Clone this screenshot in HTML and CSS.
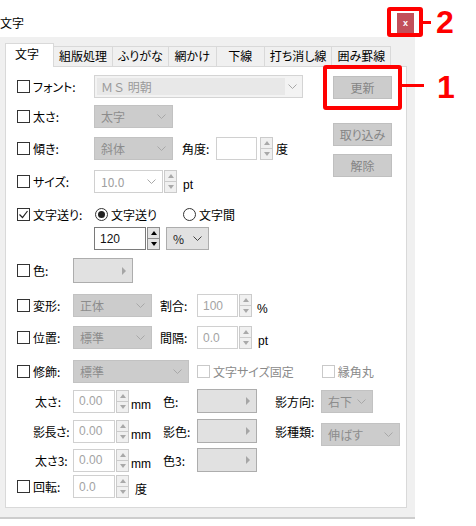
FILE: index.html
```html
<!DOCTYPE html>
<html lang="ja">
<head>
  <meta charset="UTF-8">
  <meta name="viewport" content="width=device-width, initial-scale=1.0">
  <title>文字</title>
  <link rel="stylesheet" href="styles.css">
</head>
<body>

  <div class="window">
    <div class="titlebar">
      <span class="title">文字</span>
      <button class="close">x</button>
    </div>

    <div class="body">
      <ul class="tabs">
        <li class="active">文字</li>
        <li>組版処理</li>
        <li>ふりがな</li>
        <li>網かけ</li>
        <li>下線</li>
        <li>打ち消し線</li>
        <li>囲み罫線</li>
      </ul>

      <div class="panel">
        <div class="top">
          <div class="top-rows">
            <div class="row">
              <label class="lbl wide"><span class="box"></span>フォント:</label>
              <div class="combo edit w-font"><span class="val">ＭＳ 明朝</span><svg class="chev" width="9" height="5" viewBox="0 0 9 5"><polyline points="0.5,0.5 4.5,4.5 8.5,0.5"/></svg></div>
            </div>
            <div class="row r-weight">
              <label class="lbl wide"><span class="box"></span>太さ:</label>
              <div class="combo w-79"><span>太字</span><svg class="chev" width="9" height="5" viewBox="0 0 9 5"><polyline points="0.5,0.5 4.5,4.5 8.5,0.5"/></svg></div>
            </div>
            <div class="row">
              <label class="lbl wide"><span class="box"></span>傾き:</label>
              <div class="combo w-79"><span>斜体</span><svg class="chev" width="9" height="5" viewBox="0 0 9 5"><polyline points="0.5,0.5 4.5,4.5 8.5,0.5"/></svg></div>
              <span class="sub-lbl angle">角度:</span>
              <div class="num w-41"></div>
              <div class="spin gap3"><span class="up"></span><span class="down"></span></div>
              <span class="unit">度</span>
            </div>
            <div class="row r-size">
              <label class="lbl wide"><span class="box"></span>サイズ:</label>
              <div class="combo white w-size"><span>10.0</span><svg class="chev" width="9" height="5" viewBox="0 0 9 5"><polyline points="0.5,0.5 4.5,4.5 8.5,0.5"/></svg></div>
              <div class="spin"><span class="up"></span><span class="down"></span></div>
              <span class="unit low">pt</span>
            </div>
          </div>

          <div class="side">
            <button class="btn">更新</button>
            <button class="btn b-import">取り込み</button>
            <button class="btn b-clear">解除</button>
          </div>
        </div>

        <div class="row r-feed">
          <label class="lbl wide"><span class="box on"><svg width="11" height="11" viewBox="0 0 11 11"><polyline points="1.5,5.5 4.5,8.5 9.5,2"/></svg></span>文字送り:</label>
          <span class="radio on"></span><span class="radio-txt first">文字送り</span>
          <span class="radio"></span><span class="radio-txt">文字間</span>
        </div>
        <div class="row r-pct">
          <div class="num on w-120">120</div>
          <div class="spin on"><span class="up"></span><span class="down"></span></div>
          <div class="combo light w-pct"><span>%</span><svg class="chev" width="9" height="5" viewBox="0 0 9 5"><polyline points="0.5,0.5 4.5,4.5 8.5,0.5"/></svg></div>
        </div>
        <div class="row r-color">
          <label class="lbl"><span class="box"></span>色:</label>
          <div class="color"></div>
        </div>
        <div class="row r-shape">
          <label class="lbl"><span class="box"></span>変形:</label>
          <div class="combo w-79"><span>正体</span><svg class="chev" width="9" height="5" viewBox="0 0 9 5"><polyline points="0.5,0.5 4.5,4.5 8.5,0.5"/></svg></div>
          <span class="sub-lbl">割合:</span>
          <div class="num w-41">100</div>
          <div class="spin"><span class="up"></span><span class="down"></span></div>
          <span class="unit low">%</span>
        </div>
        <div class="row">
          <label class="lbl"><span class="box"></span>位置:</label>
          <div class="combo w-79"><span>標準</span><svg class="chev" width="9" height="5" viewBox="0 0 9 5"><polyline points="0.5,0.5 4.5,4.5 8.5,0.5"/></svg></div>
          <span class="sub-lbl">間隔:</span>
          <div class="num w-41">0.0</div>
          <div class="spin"><span class="up"></span><span class="down"></span></div>
          <span class="unit low">pt</span>
        </div>
        <div class="row r-deco">
          <label class="lbl"><span class="box"></span>修飾:</label>
          <div class="combo w-deco"><span>標準</span><svg class="chev" width="9" height="5" viewBox="0 0 9 5"><polyline points="0.5,0.5 4.5,4.5 8.5,0.5"/></svg></div>
          <span class="box off fix"></span><span class="off-txt">文字サイズ固定</span>
          <span class="box off round"></span><span class="off-txt">縁角丸</span>
        </div>

        <div class="row sub r-sub1">
          <span class="lbl indent">太さ:</span>
          <div class="num w-42">0.00</div>
          <div class="spin"><span class="up"></span><span class="down"></span></div>
          <span class="unit low mm">mm</span>
          <span class="c-lbl">色:</span>
          <div class="color small"></div>
          <span class="s-lbl">影方向:</span>
          <div class="combo w-dir"><span>右下</span><svg class="chev" width="9" height="5" viewBox="0 0 9 5"><polyline points="0.5,0.5 4.5,4.5 8.5,0.5"/></svg></div>
        </div>
        <div class="row sub r-sub2">
          <span class="lbl indent tight">影長さ:</span>
          <div class="num w-42">0.00</div>
          <div class="spin"><span class="up"></span><span class="down"></span></div>
          <span class="unit low mm">mm</span>
          <span class="c-lbl">影色:</span>
          <div class="color small"></div>
          <span class="s-lbl">影種類:</span>
          <div class="combo w-79 drop"><span>伸ばす</span><svg class="chev" width="9" height="5" viewBox="0 0 9 5"><polyline points="0.5,0.5 4.5,4.5 8.5,0.5"/></svg></div>
        </div>
        <div class="row sub r-sub3">
          <span class="lbl indent">太さ3:</span>
          <div class="num w-42">0.00</div>
          <div class="spin"><span class="up"></span><span class="down"></span></div>
          <span class="unit low mm">mm</span>
          <span class="c-lbl">色3:</span>
          <div class="color small"></div>
        </div>
        <div class="row r-rotate">
          <label class="lbl"><span class="box"></span>回転:</label>
          <div class="num w-42">0.0</div>
          <div class="spin"><span class="up"></span><span class="down"></span></div>
          <span class="unit low">度</span>
        </div>
      </div>
    </div>
  </div>

  <!-- annotations -->
  <div class="mark box-1"></div>
  <div class="mark line-1"></div>
  <span class="num-mark n-1">1</span>
  <div class="mark box-2"></div>
  <div class="mark line-2"></div>
  <span class="num-mark n-2">2</span>

</body>
</html>
```

FILE: styles.css
```css
*, *::after, *::before {
  margin: 0;
  padding: 0;
  box-sizing: border-box;
}
body {
  position: relative;
  background: #fff;
  color: #000;
  font-family: "Noto Sans CJK JP", "Noto Sans", sans-serif;
  font-size: 12px;
  font-feature-settings: "palt";
}

.window {
  width: 415px;
}
.titlebar {
  display: flex;
  justify-content: space-between;
  height: 37px;
  padding: 13px 1px 0 0;
}
.title {
  line-height: 20px;
}
.close {
  width: 17px;
  height: 20px;
  border: none;
  background: #c2505a;
  color: #fff;
  font: bold 9px "Liberation Sans", sans-serif;
}

.body {
  height: 482px;
  padding: 6px 8px 0 5px;
  background: #f0f0f0;
  border-bottom: 2px solid #cdcdcd;
}

/* tabs */
.tabs {
  display: flex;
  align-items: flex-end;
  height: 23px;
  list-style: none;
}
.tabs li {
  position: relative;
  min-width: 49px;
  height: 20px;
  padding: 0 5px;
  margin-right: -1px;
  border: 1px solid #d9d9d9;
  border-bottom: none;
  background: #f0f0f0;
  line-height: 18px;
  text-align: center;
}
.tabs li.active {
  z-index: 1;
  height: 24px;
  margin-bottom: -1px;
  padding: 0 14px 0 9px;
  background: #fff;
  line-height: 20px;
}

.panel {
  height: 442px;
  padding: 8px 0 0 11px;
  border: 1px solid #d9d9d9;
  background: #fff;
}
.top {
  display: flex;
}
.top-rows {
  flex: 1;
}
.side {
  display: flex;
  flex-direction: column;
  width: 59px;
  margin: 1px 14px 0 0;
}
.btn {
  height: 23px;
  border: 1px solid #bfbfbf;
  background: #cccccc;
  color: #858585;
  font: inherit;
}
.b-import { margin-top: 24px; }
.b-clear { margin-top: 8px; }

/* rows */
.row {
  display: flex;
  align-items: center;
  height: 23px;
  margin-top: 9px;
}
.top-rows .row:first-child { margin-top: 0; }
.r-weight { margin-top: 7px; }
.r-size, .r-feed { margin-top: 10px; }
.r-pct { margin-top: 1px; padding-left: 77px; }
.r-color { height: 25px; margin-top: 8px; }
.r-shape, .r-deco { margin-top: 11px; }
.r-sub1 { height: 24px; margin-top: 6px; }
.r-sub2 { height: 24px; margin-top: 6px; }
.r-sub3 { height: 24px; margin-top: 5px; }
.r-rotate { margin-top: 3px; }

.lbl {
  display: flex;
  align-items: center;
  width: 56px;
  flex-shrink: 0;
}
.lbl.wide { width: 77px; }
.lbl.indent { padding-left: 18px; }
.lbl.tight { padding-left: 16px; letter-spacing: -0.5px; }

.box {
  display: flex;
  align-items: center;
  justify-content: center;
  width: 13px;
  height: 13px;
  margin-right: 3px;
  border: 1px solid #333;
  background: #fff;
}
.box svg {
  fill: none;
  stroke: #222;
  stroke-width: 1.2;
}
.box.off { border-color: #c9c9c9; }
.box.fix { margin-left: 8px; }
.box.round { margin-left: 28px; }
.off-txt { color: #8a8a8a; }

/* combos */
.combo {
  display: flex;
  align-items: center;
  justify-content: space-between;
  height: 23px;
  padding: 0 6px 0 6px;
  border: 1px solid #c2c2c2;
  background: #cccccc;
  color: #8c8c8c;
  flex-shrink: 0;
}
.chev {
  fill: none;
  stroke: #a8a8a8;
  stroke-width: 1;
}
.combo.edit {
  padding: 2px 5px 2px 2px;
  background: #f3f3f3;
  border-color: #d4d4d4;
  color: #9a9a9a;
}
.combo.edit .val {
  display: flex;
  align-items: center;
  width: 188px;
  height: 100%;
  padding-left: 4px;
  background: #e8e8e8;
  font-feature-settings: normal;
}
.combo.white {
  background: #fff;
  border-color: #d0d0d0;
  color: #a0a0a0;
}
.combo.light {
  margin-left: 6px;
  background: #e1e1e1;
  border-color: #adadad;
  color: #222;
}
.combo.light .chev { stroke: #444; }
.combo.drop { margin-top: 6px; }
.w-font { width: 209px; }
.w-79 { width: 79px; }
.w-size { width: 69px; }
.w-pct { width: 43px; }
.w-deco { width: 116px; }
.w-dir { width: 52px; }

/* number fields */
.num {
  display: flex;
  align-items: center;
  height: 23px;
  padding-left: 5px;
  border: 1px solid #d0d0d0;
  background: #fff;
  color: #a3a3a3;
  font-family: "Liberation Sans", sans-serif;
  font-size: 12px;
}
.num.on {
  border-color: #7a7a7a;
  color: #111;
}
.w-41 { width: 41px; }
.w-42 { width: 42px; }
.w-120 { width: 52px; }

.spin {
  display: flex;
  flex-direction: column;
  width: 13px;
  height: 23px;
  margin-left: 1px;
}
.spin.gap3 { margin-left: 3px; }
.spin span {
  display: flex;
  align-items: center;
  justify-content: center;
  flex: 1;
  border: 1px solid #cbcbcb;
  background: #f0f0f0;
}
.spin span + span { border-top: none; }
.spin .up::after {
  content: "";
  border-left: 3px solid transparent;
  border-right: 3px solid transparent;
  border-bottom: 4px solid #a9a9a9;
}
.spin .down::after {
  content: "";
  border-left: 3px solid transparent;
  border-right: 3px solid transparent;
  border-top: 4px solid #a9a9a9;
}
.spin.on span {
  border-color: #8c8c8c;
  background: #e3e3e3;
}
.spin.on .up::after { border-bottom-color: #000; }
.spin.on .down::after { border-top-color: #000; }

.unit {
  margin-left: 3px;
}
.unit.low {
  align-self: flex-end;
  margin-left: 6px;
  line-height: 15px;
  font-family: "Liberation Sans", "Noto Sans CJK JP", sans-serif;
}
.r-shape .unit.low { margin-left: 5px; }
.unit.mm {
  width: 32px;
  margin-left: 2px;
}

.sub-lbl {
  width: 37px;
  margin-left: 8px;
}
.sub-lbl.angle {
  width: 34px;
  margin-left: 9px;
}
.c-lbl { width: 34px; }
.s-lbl {
  width: 46px;
  margin-left: 18px;
}

/* radios */
.radio {
  display: flex;
  align-items: center;
  justify-content: center;
  width: 13px;
  height: 13px;
  margin-left: 1px;
  border: 1px solid #333;
  border-radius: 50%;
}
.radio.on::after {
  content: "";
  width: 7px;
  height: 7px;
  border-radius: 50%;
  background: #222;
}
.radio-txt { margin-left: 3px; }
.radio-txt.first { width: 71px; }

/* colour buttons */
.color {
  display: flex;
  align-items: center;
  justify-content: flex-end;
  width: 60px;
  height: 25px;
  padding-right: 6px;
  border: 1px solid #adadad;
  background: #e1e1e1;
}
.color.small { height: 24px; }
.color::after {
  content: "";
  border-top: 4px solid transparent;
  border-bottom: 4px solid transparent;
  border-left: 4px solid #a6a6a6;
}

/* red annotation marks */
.mark {
  position: absolute;
  border-color: #f00;
}
.box-1 {
  left: 323px;
  top: 65px;
  width: 79px;
  height: 45px;
  border: 4px solid #f00;
  border-radius: 3px;
}
.line-1 {
  left: 402px;
  top: 84px;
  width: 22px;
  height: 3px;
  background: #f00;
}
.box-2 {
  left: 387px;
  top: 7px;
  width: 36px;
  height: 30px;
  border: 4px solid #f00;
  border-radius: 3px;
}
.line-2 {
  left: 423px;
  top: 21px;
  width: 8px;
  height: 3px;
  background: #f00;
}
.num-mark {
  position: absolute;
  color: #f00;
  font: bold 32px/32px "Liberation Sans", sans-serif;
}
.n-1 { left: 437px; top: 71px; }
.n-2 { left: 436px; top: 6px; }
```
